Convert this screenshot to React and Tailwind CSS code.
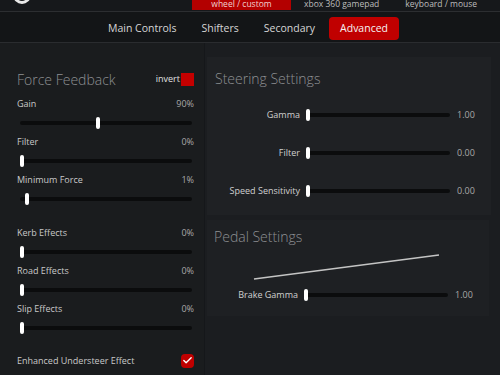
import { Check } from "lucide-react";

const ffbTop = [
  { label: "Gain", value: "90%", pos: 44 },
  { label: "Filter", value: "0%", pos: 0 },
  { label: "Minimum Force", value: "1%", pos: 3 },
];

const ffbEffects = [
  { label: "Kerb Effects", value: "0%", pos: 0 },
  { label: "Road Effects", value: "0%", pos: 0 },
  { label: "Slip Effects", value: "0%", pos: 0 },
];

const steering = [
  { label: "Gamma", value: "1.00" },
  { label: "Filter", value: "0.00" },
  { label: "Speed Sensitivity", value: "0.00" },
];

const Slider = ({ pos }) => {
  // pos is percent along the track
  return (
    <div className="relative h-[14px] flex items-center w-full">
      <div className="h-[4px] w-full bg-[#0b0c0d] rounded-sm" />
      <div
        className="absolute top-[1px] h-[12px] w-[4px] rounded-sm bg-white"
        style={{ left: `${pos}%` }}
      />
    </div>
  );
};

const FfbItem = ({ item }) => (
  <div className="flex flex-col mb-[5px]">
    <div className="flex justify-between h-[14px] items-center text-[9px] text-[#c9c9c9]">
      <span>{item.label}</span>
      <span className="text-[#a9a9a9]">{item.value}</span>
    </div>
    <div className="mt-[5px] pl-[3px] pr-[2px]">
      <Slider pos={item.pos} />
    </div>
  </div>
);

const RowSlider = ({ label, value, labelW = 99 }) => (
  <div className="flex items-center h-[14px]">
    <div className="text-right text-[9px] text-[#d0d0d0] pr-[6px]" style={{ width: labelW }}>
      {label}
    </div>
    <div className="w-[144px]">
      <Slider pos={0} />
    </div>
    <div className="pl-[7px] text-[9px] text-[#a9a9a9]">{value}</div>
  </div>
);

const App = () => {
  const tabs = ["Main Controls", "Shifters", "Secondary", "Advanced"];
  return (
    <div
      className="w-[500px] h-[375px] overflow-hidden bg-[#1b1d20] flex flex-col"
      style={{ fontFamily: '"Open Sans", "Noto Sans", sans-serif' }}
    >
      {/* top strip */}
      <div className="h-[12px] bg-[#16181b] border-b border-[#2c2e31] relative">
        <div className="absolute left-[13px] top-[-14px] w-[18px] h-[18px] rounded-full border-[3px] border-[#e8e8e8]" />
        <div className="flex items-end h-[10px] pl-[192px] text-[8.5px] leading-[10px] whitespace-nowrap">
          <div className="w-[99px] h-[20px] shrink-0 bg-[#b30000] text-[#f2cfcf] flex items-end justify-center pb-[1px] self-end">
            wheel / custom
          </div>
          <div className="ml-[13px] shrink-0 text-[#bdbdbd] pb-[1px]">xbox 360 gamepad</div>
          <div className="ml-[26px] shrink-0 text-[#bdbdbd] pb-[1px]">keyboard / mouse</div>
        </div>
      </div>

      {/* tabs */}
      <div className="h-[31px] bg-[#131517] border-b border-[#2a2c2f] flex items-center pt-[3px] pl-[97px] gap-[3px]">
        {tabs.map((t) => (
          <div
            key={t}
            className={
              t === "Advanced"
                ? "h-[23px] px-[11px] flex items-center bg-[#c00000] rounded-sm text-[10.5px] text-[#f4f4f4]"
                : "h-[23px] px-[11px] flex items-center text-[10.5px] text-[#d6d6d6]"
            }
          >
            {t}
          </div>
        ))}
      </div>

      {/* main */}
      <div className="flex flex-1">
        {/* left column */}
        <div className="w-[205px] bg-[#1a1c1e] border-r border-[#15171a] pl-[17px] pr-[10px] pt-[26px]">
          <div className="flex items-center justify-between h-[20px] mb-[8px]">
            <span className="text-[14px] font-light text-[#8e9093]">Force Feedback</span>
            <div className="flex items-center">
              <span className="text-[9px] text-[#e0e0e0] mr-[1px]">invert</span>
              <div className="w-[13px] h-[13px] bg-[#c40000]" />
            </div>
          </div>
          {ffbTop.map((it) => (
            <FfbItem key={it.label} item={it} />
          ))}
          <div className="h-[15px]" />
          {ffbEffects.map((it) => (
            <FfbItem key={it.label} item={it} />
          ))}
          <div className="flex items-center justify-between mt-[18px] h-[15px]">
            <span className="text-[9px] text-[#c9c9c9]">Enhanced Understeer Effect</span>
            <div className="w-[13px] h-[14px] bg-[#c00000] rounded-sm flex items-center justify-center">
              <Check size={11} strokeWidth={3} color="#ffffff" />
            </div>
          </div>
        </div>

        {/* right column */}
        <div className="flex-1 pl-[2px] pr-[9px] pt-[14px] flex flex-col gap-[5px]">
          <div className="bg-[#1f2124] h-[158px] pl-[8px] pt-[11px]">
            <div className="text-[14px] font-light text-[#8e9093] h-[20px] flex items-center">
              Steering Settings
            </div>
            <div className="ml-[-8px] mt-[20px] flex flex-col gap-[24px]">
              {steering.map((s) => (
                <RowSlider key={s.label} label={s.label} value={s.value} />
              ))}
            </div>
          </div>
          <div className="bg-[#1e2023] h-[96px] pl-[7px] pt-[6px] mr-[2px]">
            <div className="text-[14px] font-light text-[#8e9093] h-[20px] flex items-center">
              Pedal Settings
            </div>
            <svg width="273" height="36" className="block ml-[-7px]">
              <line x1="47" y1="33" x2="232" y2="9" stroke="#c4c4c4" strokeWidth="1.5" />
            </svg>
            <div className="ml-[-7px] mt-[6px]">
              <RowSlider label="Brake Gamma" value="1.00" labelW={97} />
            </div>
          </div>
        </div>
      </div>
    </div>
  );
};

export default App;
